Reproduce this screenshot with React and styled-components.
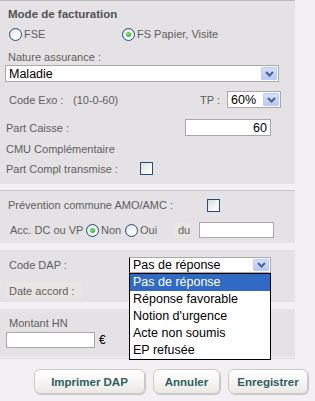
import React, { useState } from "react"
import styled, { createGlobalStyle } from "styled-components"

const GlobalStyle = createGlobalStyle`
  html, body {
    margin: 0;
    padding: 0;
    background: #f2f0f2;
  }
  body {
    font-family: "Liberation Sans", Arial, sans-serif;
  }
`

const Page = styled.div`
  width: 315px;
  height: 401px;
  overflow: hidden;
  background: #f2f0f2;
  display: flex;
  flex-direction: column;
`

const Panel = styled.div`
  width: 295px;
  display: flex;
  flex-direction: column;
  border-top: 1px solid #b9b8b9;
  padding-bottom: 1px;
  border-bottom: 1px solid #d9d7d9;
`

const Section = styled.div`
  background: #e4e2e4;
  margin-top: ${p => p.$mt || 0}px;
  padding-top: ${p => p.$pt || 0}px;
  padding-bottom: ${p => p.$pb || 0}px;
  border-top: ${p => (p.$line ? "1px solid #c6c4c6" : "none")};
  display: flex;
  flex-direction: column;
`

const Row = styled.div`
  display: flex;
  align-items: center;
  height: ${p => p.$h}px;
  margin-top: ${p => p.$mt || 0}px;
  padding-left: ${p => p.$pl || 0}px;
`

const Heading = styled.div`
  font-size: 11.5px;
  font-weight: bold;
  color: #525252;
`

const Label = styled.span`
  font-size: 11px;
  color: #5e5e5e;
  white-space: nowrap;
  flex: none;
  width: ${p => (p.$w ? `${p.$w}px` : "auto")};
  margin-left: ${p => p.$ml || 0}px;
`

const Tag = styled.span`
  font-size: 11px;
  color: #5e5e5e;
  background: #e9e5e2;
  height: ${p => p.$h}px;
  width: ${p => p.$w}px;
  padding-left: ${p => p.$pl || 0}px;
  box-sizing: border-box;
  display: flex;
  align-items: center;
  flex: none;
`

const RadioGroup = styled.label`
  display: flex;
  align-items: center;
  width: ${p => p.$w}px;
  flex: none;
`

const RadioCircle = styled.span`
  width: 13px;
  height: 13px;
  box-sizing: border-box;
  border-radius: 50%;
  border: 1px solid #1c5180;
  background: radial-gradient(circle at 65% 70%, #ffffff 0%, #f4f4f0 45%, #d6d5ce 100%);
  display: flex;
  align-items: center;
  justify-content: center;
  flex: none;

  &::after {
    content: "";
    width: 5px;
    height: 5px;
    border-radius: 50%;
    background: radial-gradient(circle at 40% 40%, #7fe07f, #21a121);
    display: ${p => (p.$checked ? "block" : "none")};
  }
`

const Check = styled.span`
  width: 13px;
  height: 13px;
  box-sizing: border-box;
  border: 1px solid #1c5180;
  background: linear-gradient(135deg, #dcdcd7 0%, #f4f4f0 60%, #ffffff 100%);
  flex: none;
`

const SelectWrap = styled.div`
  position: relative;
  width: ${p => p.$w}px;
  height: ${p => p.$h}px;
  flex: none;
`

const SelectBox = styled.div`
  width: 100%;
  height: 100%;
  box-sizing: border-box;
  background: #fff;
  border: 1px solid #a9a9a9;
  border-left-color: ${p => (p.$open ? "#000" : "#a9a9a9")};
  display: flex;
  align-items: center;
  padding: 1px;
`

const SelectText = styled.span`
  flex: 1;
  font-size: 12.5px;
  color: #000;
  padding-left: 2px;
  white-space: nowrap;
  overflow: hidden;
`

const ArrowBtn = styled.span`
  width: 16px;
  height: 100%;
  box-sizing: border-box;
  border: 1px solid #bccdf5;
  border-radius: 1px;
  background: linear-gradient(#d3dffb, #b7c9f6);
  display: flex;
  align-items: center;
  justify-content: center;
  flex: none;
`

const DropList = styled.ul`
  position: absolute;
  top: 100%;
  left: 0;
  width: 100%;
  box-sizing: border-box;
  margin: 0;
  padding: 0;
  list-style: none;
  background: #fff;
  border: 1px solid #000;
  z-index: 5;
`

const DropItem = styled.li`
  height: 17px;
  line-height: 17px;
  padding-left: 3px;
  font-size: 12.5px;
  color: ${p => (p.$active ? "#fff" : "#000")};
  background: ${p => (p.$active ? "#316ac5" : "#fff")};
  white-space: nowrap;
`

const TextInput = styled.input`
  width: ${p => p.$w}px;
  height: ${p => p.$h}px;
  box-sizing: border-box;
  border: 1px solid #a8a8a8;
  background: #fff;
  margin: 0;
  margin-left: ${p => p.$ml || 0}px;
  padding: 0 3px;
  font-family: "Liberation Sans", Arial, sans-serif;
  font-size: 12.5px;
  color: #000;
  text-align: ${p => p.$align || "left"};
  outline: none;
  flex: none;
`

const Euro = styled.span`
  font-size: 12px;
  color: #000;
  margin-left: 4px;
`

const Footer = styled.div`
  display: flex;
  justify-content: flex-end;
  gap: 8px;
  padding: 10px 7px 0 0;
`

const Button = styled.button`
  width: ${p => p.$w}px;
  height: 25px;
  border: 1px solid #cbcaca;
  border-radius: 6px;
  background: linear-gradient(#ffffff 0%, #f7f6f4 50%, #e9e8e4 100%);
  box-shadow: 1px 1px 1px rgba(0, 0, 0, 0.18);
  font-family: "Liberation Sans", Arial, sans-serif;
  font-size: 11.5px;
  font-weight: bold;
  color: #2f5d5e;
  padding: 0;
  cursor: pointer;
`

const Chevron = () => (
  <svg width="9" height="6" viewBox="0 0 9 6">
    <path d="M1 1 L4.5 4.5 L8 1" fill="none" stroke="#4d6185" strokeWidth="2" />
  </svg>
)

const Select = ({ w, h, value, open, options, active }) => (
  <SelectWrap $w={w} $h={h}>
    <SelectBox $open={open}>
      <SelectText>{value}</SelectText>
      <ArrowBtn>
        <Chevron />
      </ArrowBtn>
    </SelectBox>
    {open && (
      <DropList>
        {options.map(o => (
          <DropItem key={o} $active={o === active}>
            {o}
          </DropItem>
        ))}
      </DropList>
    )}
  </SelectWrap>
)

const Radio = ({ w, checked, children }) => (
  <RadioGroup $w={w}>
    <RadioCircle $checked={checked} />
    <Label $ml={2}>{children}</Label>
  </RadioGroup>
)

const dapOptions = [
  "Pas de réponse",
  "Réponse favorable",
  "Notion d'urgence",
  "Acte non soumis",
  "EP refusée",
]

export default function App() {
  const [dap] = useState("Pas de réponse")

  return (
    <Page>
      <GlobalStyle />
      <Panel>
        <Section $pb={7}>
          <Row $h={25} $pl={8}>
            <Heading>Mode de facturation</Heading>
          </Row>
          <Row $h={16} $pl={9}>
            <Radio w={113}>FSE</Radio>
            <Radio w={150} checked>
              FS Papier, Visite
            </Radio>
          </Row>
          <Row $h={16} $mt={7} $pl={8}>
            <Label>Nature assurance :</Label>
          </Row>
          <Row $h={17} $pl={5}>
            <Select w={274} h={17} value="Maladie" />
          </Row>
          <Row $h={17} $mt={9} $pl={9}>
            <Label $w={64}>Code Exo :</Label>
            <Label $w={127}>(10-0-60)</Label>
            <Label $w={27}>TP :</Label>
            <Select w={54} h={17} value="60%" />
          </Row>
          <Row $h={17} $mt={11} $pl={6}>
            <Label $w={179}>Part Caisse :</Label>
            <TextInput $w={86} $h={17} $align="right" defaultValue="60" />
          </Row>
          <Row $h={16} $mt={5} $pl={6}>
            <Label>CMU Complémentaire</Label>
          </Row>
          <Row $h={17} $mt={3} $pl={6}>
            <Label $w={134}>Part Compl transmise :</Label>
            <Check />
          </Row>
        </Section>

        <Section $mt={6} $line $pt={5} $pb={5}>
          <Row $h={18} $pl={8}>
            <Label $w={199}>Prévention commune AMO/AMC :</Label>
            <Check />
          </Row>
          <Row $h={16} $mt={8} $pl={10}>
            <Label $w={76}>Acc. DC ou VP</Label>
            <Radio w={39} checked>
              Non
            </Radio>
            <Radio w={49}>Oui</Radio>
            <Tag $w={16} $h={15} $pl={4}>
              du
            </Tag>
            <TextInput $w={75} $h={16} $ml={9} />
          </Row>
        </Section>

        <Section $mt={7} $pt={7} $pb={4}>
          <Row $h={16} $pl={9}>
            <Label $w={120}>Code DAP :</Label>
            <Select w={142} h={16} value={dap} open options={dapOptions} active={dap} />
          </Row>
          <Row $h={15} $mt={10} $pl={6}>
            <Tag $w={77} $h={15} $pl={3}>
              Date accord :
            </Tag>
          </Row>
        </Section>

        <Section $mt={7} $pt={6} $pb={9}>
          <Row $h={16} $pl={9}>
            <Label>Montant HN</Label>
          </Row>
          <Row $h={16} $mt={1} $pl={6}>
            <TextInput $w={89} $h={16} />
            <Euro>€</Euro>
          </Row>
        </Section>
      </Panel>

      <Footer>
        <Button $w={111}>Imprimer DAP</Button>
        <Button $w={67}>Annuler</Button>
        <Button $w={80}>Enregistrer</Button>
      </Footer>
    </Page>
  )
}
